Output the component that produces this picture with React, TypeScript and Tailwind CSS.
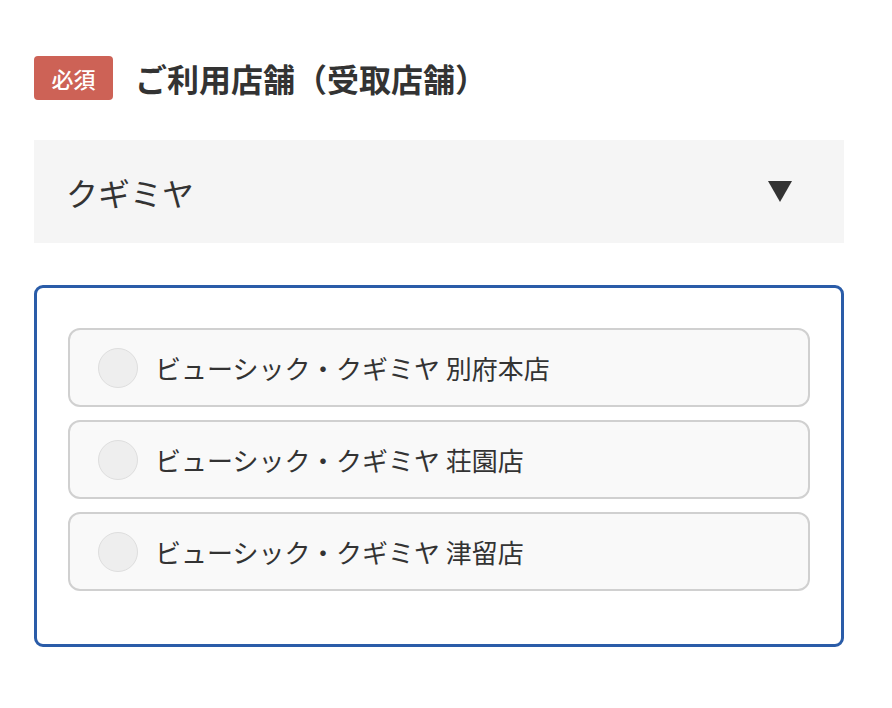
import React from "react";

const stores = [
  "ビューシック・クギミヤ 別府本店",
  "ビューシック・クギミヤ 荘園店",
  "ビューシック・クギミヤ 津留店",
];

export default function App() {
  return (
    <div
      className="min-h-[708px] w-[892px] bg-white pl-[34px] pr-[48px] pt-[56px] text-[#333]"
      style={{ fontFamily: '"Noto Sans CJK JP", "Noto Sans", sans-serif' }}
    >
      <div className="flex h-[44px] items-center">
        <span className="flex h-[44px] w-[79px] items-center justify-center rounded-[4px] bg-[#cd6256] text-[22px] font-medium leading-none text-white">
          必須
        </span>
        <h2 className="ml-[22px] text-[32px] font-bold leading-none text-[#333]">
          ご利用店舗（受取店舗）
        </h2>
      </div>

      <div className="mt-[40px] flex h-[103px] items-center justify-between bg-[#f5f5f5] pl-[32px] pr-[52px]">
        <span className="text-[32px] leading-none text-[#333]">クギミヤ</span>
        <svg width="24" height="21" viewBox="0 0 24 21">
          <polygon points="0,0 24,0 12,21" fill="#333" />
        </svg>
      </div>

      <div className="mt-[42px] h-[362px] rounded-[9px] border-[3px] border-[#2a5ca8] px-[31px] pt-[40px]">
        <div className="flex flex-col gap-[13px]">
          {stores.map((s) => (
            <label
              key={s}
              className="flex h-[79px] items-center rounded-[12px] border-2 border-[#d0d0d0] bg-[#f9f9f9] pl-[28px]"
            >
              <span className="h-[40px] w-[40px] shrink-0 rounded-full border border-[#dedede] bg-[#eeeeee]" />
              <span className="ml-[17px] text-[26px] leading-none text-[#333]">{s}</span>
            </label>
          ))}
        </div>
      </div>
    </div>
  );
}
